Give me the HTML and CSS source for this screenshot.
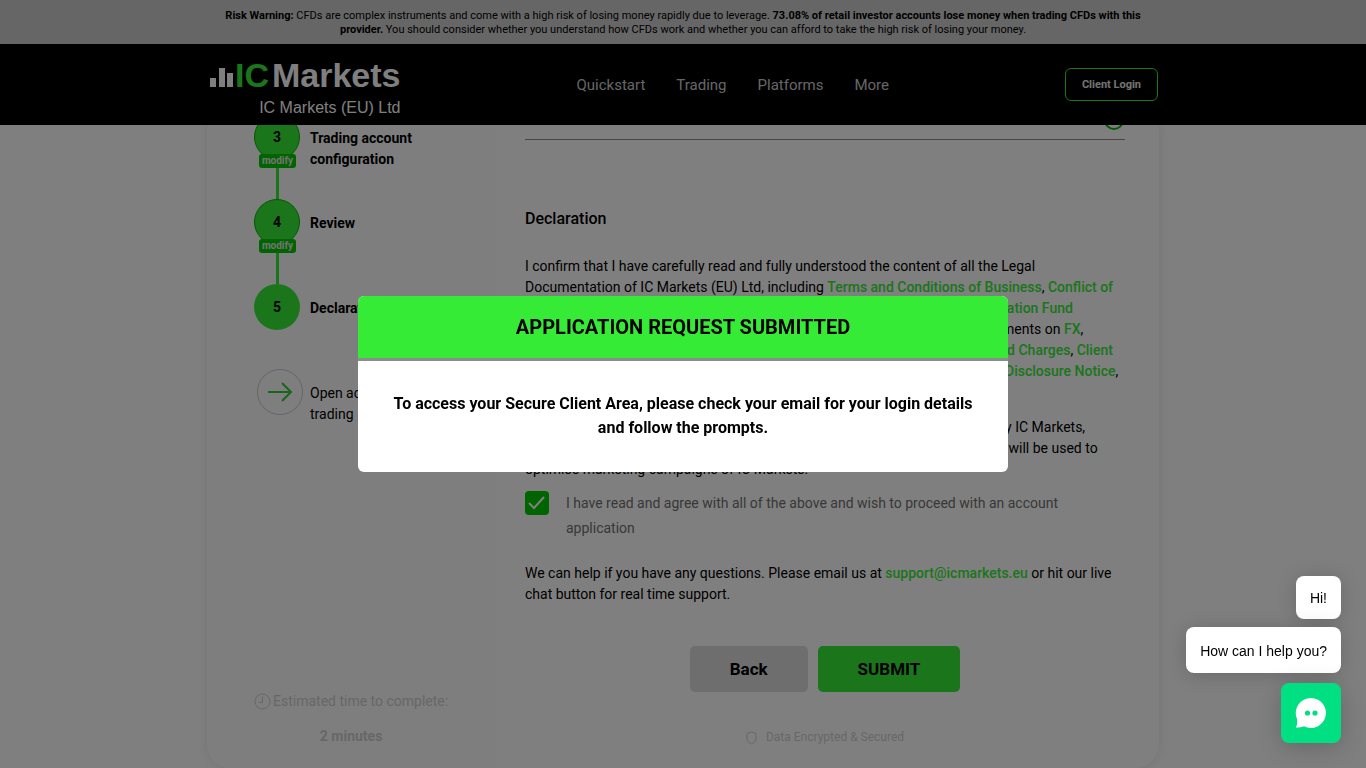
FILE: index.html
```html
<!DOCTYPE html>
<html lang="en">
<head>
<meta charset="utf-8">
<meta name="viewport" content="width=device-width, initial-scale=1">
<title>IC Markets (EU) Ltd</title>
<link rel="stylesheet" href="styles.css">
</head>
<body>
<div class="page">
  <p class="risk"><span class="risk-text"><b>Risk Warning:</b> CFDs are complex instruments and come with a high risk of losing money rapidly due to leverage. <b>73.08% of retail investor accounts lose money when trading CFDs with this provider.</b> You should consider whether you understand how CFDs work and whether you can afford to take the high risk of losing your money.</span></p>
  <header class="header">
    <div class="header-inner">
      <a class="logo" href="#">
        <span class="logo-main">
          <svg class="logo-bars" width="23" height="20" viewBox="0 0 23 20" aria-hidden="true"><path d="M0 11h6v9H0zM9 1h6v19H9zM17 6h6v14h-6z"/></svg>
          <span class="logo-ic">IC</span><span class="logo-name">Markets</span>
        </span>
        <span class="logo-sub">IC Markets (EU) Ltd</span>
      </a>
      <nav class="nav"><a href="#">Quickstart</a><a href="#">Trading</a><a href="#">Platforms</a><a href="#">More</a></nav>
      <button class="login" type="button">Client Login</button>
    </div>
  </header>
  <main class="content">
    <div class="card">
      <aside class="sidebar">
        <ol class="steps">
          <li class="step"><div class="marker"><span class="circle ringed">3</span><button class="modify" type="button">modify</button><span class="line"></span></div><span class="label">Trading account configuration</span></li>
          <li class="step"><div class="marker"><span class="circle ringed">4</span><button class="modify" type="button">modify</button><span class="line"></span></div><span class="label">Review</span></li>
          <li class="step"><div class="marker"><span class="circle">5</span></div><span class="label">Declaration</span></li>
          <li class="step last"><div class="marker"><span class="circle next"><svg width="26" height="22" viewBox="0 0 26 22" aria-hidden="true"><path d="M1 11h23M15 2l9 9-9 9"/></svg></span></div><span class="label">Open account and start trading</span></li>
        </ol>
        <div class="estimate">
          <p class="estimate-title"><svg width="17" height="17" viewBox="0 0 17 17" aria-hidden="true"><circle cx="8.500" cy="8.500" r="7.500"/><path d="M8.500 3.500v6H5"/></svg>Estimated time to complete:</p>
          <p class="estimate-time">2 minutes</p>
        </div>
      </aside>
      <section class="form">
        <div class="accordion"><svg width="22" height="22" viewBox="0 0 22 22" aria-hidden="true"><circle cx="11" cy="11" r="9"/><path d="M7 9l4 4 4-4"/></svg></div>
        <h1>Declaration</h1>
        <p>I confirm that I have carefully read and fully understood the content of all the Legal<br>Documentation of IC Markets (EU) Ltd, including <a href="#">Terms and Conditions of Business</a>, <a href="#">Conflict of</a><br><a href="#">Interest Policy</a>, <a href="#">Order Executions</a>, <a href="#">Client Complaints Policy</a>, <a href="#">Investor Compensation Fund</a><br><a href="#">Policy</a>, <a href="#">Leverage on Margin Policy</a>, <a href="#">Website Use Terms</a>, Key Information Documents on <a href="#">FX</a>,<br><a href="#">Commodities</a>, <a href="#">Indices</a>, <a href="#">Stocks</a>, <a href="#">Bonds</a>, <a href="#">Digital Currencies</a>, <a href="#">Futures</a>, <a href="#">All Costs and Charges</a>, <a href="#">Client</a><br><a href="#">Categorisation Policy</a>, <a href="#">Privacy Policy</a>, <a href="#">Cookie Policy</a>, <a href="#">Complaints</a> and the <a href="#">Risk Disclosure Notice</a>,<br>and that I agree to be bound by them.</p>
        <p>I understand that the personal information that I have provided, as collected by IC Markets,<br>including my email address, location and any account activity on this website, will be used to<br>optimise marketing campaigns of IC Markets.</p>
        <label class="agree"><input type="checkbox" checked><span>I have read and agree with all of the above and wish to proceed with an account application</span></label>
        <p class="help">We can help if you have any questions. Please email us at <a href="#">support@icmarkets.eu</a> or hit our live chat button for real time support.</p>
        <div class="actions"><button class="back" type="button">Back</button><button class="submit" type="button">SUBMIT</button></div>
        <p class="secure"><svg width="11" height="14" viewBox="0 0 11 14" aria-hidden="true"><path d="M5.500 1 10 2.500V8q0 3-4.500 5Q1 11 1 8V2.500z"/></svg>Data Encrypted &amp; Secured</p>
      </section>
    </div>
  </main>
</div>
<div class="overlay">
  <div class="modal" role="dialog" aria-labelledby="modal-title">
    <h2 id="modal-title">APPLICATION REQUEST SUBMITTED</h2>
    <p>To access your Secure Client Area, please check your email for your login details and follow the prompts.</p>
  </div>
</div>
<div class="chat">
  <p class="bubble">Hi!</p>
  <p class="bubble wide">How can I help you?</p>
  <button class="chat-button" type="button" aria-label="Open chat"><svg width="32" height="32" viewBox="0 0 32 32" aria-hidden="true"><path d="M16 1a15 15 0 1 1-7 28.300Q5 31 1 30.500 2.500 28 2 22A15 15 0 0 1 16 1z" fill="#fff"/><circle cx="12.500" cy="16" r="2.600" fill="#00df82"/><circle cx="20" cy="16" r="2.600" fill="#00df82"/></svg></button>
</div>
</body>
</html>
```
FILE: styles.css
```css
* { box-sizing: border-box; }
body { margin: 0; font-family: Roboto, sans-serif; font-size: 14px; line-height: 21px; color: #000; background: #fff; overflow: hidden; }
p, h1, h2, ol { margin: 0; padding: 0; }
a { text-decoration: none; }
button { font-family: inherit; border: 0; padding: 0; cursor: pointer; }

.page { height: 100vh; overflow: hidden; display: flex; flex-direction: column; }
.risk { background: #cdcdcd; padding: 9px 16px 7px; font-size: 11px; line-height: 14px; text-align: center; }
.risk-text { display: block; max-width: 952px; margin: 0 auto; }
.header { background: #000; padding: 16px; position: relative; z-index: 1; }
.header-inner { max-width: 950px; margin: 0 auto; padding-left: 2px; display: flex; justify-content: space-between; align-items: center; height: 49px; }
.logo { color: #fff; display: flex; flex-direction: column; align-items: flex-end; padding-top: 7px; font-family: "Liberation Sans", sans-serif; }
.logo-main { display: flex; align-items: flex-end; font-size: 34px; font-weight: 700; line-height: 32px; }
.logo-bars { fill: #fff; margin: 0 2px 4px 0; }
.logo-ic { color: #36eb36; margin-right: 3px; }
.logo-sub { font-size: 16px; line-height: 20px; margin-top: 7px; }
.nav { display: flex; gap: 31px; padding-top: 2px; font-size: 15px; }
.nav a { color: #ccc; }
.login { width: 93px; height: 33px; border: 1px solid #36eb36; border-radius: 6px; background: transparent; color: #e6e6e6; font-size: 11px; font-weight: 700; }

.content { flex: 1; min-height: 0; overflow: hidden; }
.card { max-width: 952px; margin: -16px auto 0; display: grid; grid-template-columns: 290px 1fr; background: #fff; border-radius: 24px; box-shadow: 0 0 12px rgba(0,0,0,.1); }
.sidebar { padding: 5px 20px 21px 47px; background: #fdfdfd; border-radius: 24px 0 0 24px; display: flex; flex-direction: column; }
.steps { list-style: none; }
.step { display: flex; gap: 7px; min-height: 85px; }
.marker { width: 49px; display: flex; flex-direction: column; }
.circle { width: 46px; height: 46px; border-radius: 50%; background: #36eb36; display: flex; align-items: center; justify-content: center; font-weight: 700; flex: none; }
.ringed { border: 1px solid #00b400; }
.modify { width: 37px; height: 14px; margin: -6px 0 0 5px; border-radius: 3px; background: #00c800; color: #e6e6e6; font-size: 10px; font-weight: 700; line-height: 14px; position: relative; }
.line { width: 3px; flex: 1; margin-left: 22px; background: #36eb36; }
.label { width: 120px; padding-top: 14px; font-weight: 700; }
.last .marker { align-items: flex-end; }
.last .label { width: 160px; font-weight: 400; }
.next { border: 1px solid #c8c8c8; background: transparent; }
.next svg { fill: none; stroke: #36c936; stroke-width: 2; }
.estimate { margin-top: auto; color: #cfcfcf; text-align: center; display: grid; gap: 14px; padding-right: 30px; }
.estimate-title { display: flex; align-items: center; gap: 2px; white-space: nowrap; }
.estimate svg, .secure svg { fill: none; stroke: #cfcfcf; }
.estimate-time { font-weight: 700; }

.form { padding: 0 34px 20px 28px; }
.form a { color: #36eb36; font-weight: 500; }
.accordion { display: flex; justify-content: flex-end; padding-bottom: 8px; border-bottom: 1px solid #8c8c8c; }
.accordion svg { fill: none; stroke: #00b400; stroke-width: 2; }
h1 { margin: 67px 0 25px; font-size: 16px; font-weight: 500; line-height: 24px; }
.form p + p { margin-top: 14px; }
.agree { display: flex; gap: 17px; margin-top: 11px; color: #707070; line-height: 25px; }
.agree input { appearance: none; flex: none; width: 24px; height: 24px; margin: 0; border-radius: 4px; background: #00c800 url("data:image/svg+xml,%3Csvg xmlns='http://www.w3.org/2000/svg' viewBox='0 0 24 24'%3E%3Cpath d='M4 12l5 5 10-11' fill='none' stroke='white' stroke-width='2'/%3E%3C/svg%3E"); }
.help { margin-top: 22px; }
.actions { display: flex; justify-content: center; gap: 10px; margin-top: 41px; }
.actions button { height: 46px; padding: 0 40px; border-radius: 5px; font-size: 17px; font-weight: 700; }
.actions .back { background: #dcdcdc; }
.actions .submit { background: #36eb36; }
.secure { display: flex; justify-content: center; align-items: center; gap: 9px; margin-top: 35px; font-size: 12px; color: #cfcfcf; }

.overlay { position: fixed; inset: 0; z-index: 2; background: rgba(0,0,0,.5); display: flex; align-items: center; justify-content: center; }
.modal { width: 650px; max-width: 95%; background: #fff; border-radius: 6px; overflow: hidden; text-align: center; }
.modal h2 { background: #36eb36; border-bottom: 3px solid #8c8c8c; padding: 16px; font-size: 20px; line-height: 30px; font-weight: 700; }
.modal p { padding: 31px 32px 32px; font-size: 16px; line-height: 24px; font-weight: 700; }
.chat { position: fixed; right: 25px; bottom: 25px; z-index: 3; display: flex; flex-direction: column; align-items: flex-end; font-family: "Liberation Sans", sans-serif; }
.bubble { background: #fff; border-radius: 8px; padding: 12px 14px 10px; margin-bottom: 8px; box-shadow: 0 2px 20px rgba(0,0,0,.18); }
.wide { padding: 14px 14px 11px; margin-bottom: 10px; }
.chat-button { width: 60px; height: 60px; border-radius: 8px; background: #00df82; display: grid; place-items: center; box-shadow: 0 4px 24px rgba(0,0,0,.2); }
```
